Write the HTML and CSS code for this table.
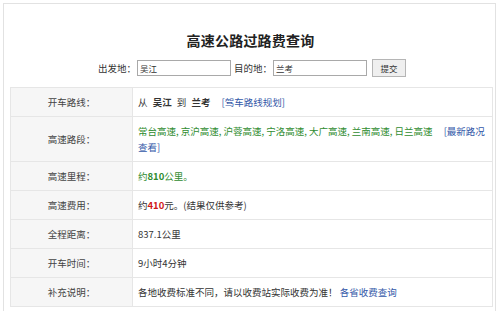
FILE: index.html
```html
<!DOCTYPE html>
<html lang="zh-CN">
<head>
<meta charset="utf-8">
<title>高速公路过路费查询</title>
<link rel="stylesheet" href="styles.css">
</head>
<body>
<div class="frame">
  <h1 class="title">高速公路过路费查询</h1>
  <form class="search">
    <label class="field">出发地：<input class="box" type="text" value="吴江"></label>
    <label class="field">目的地：<input class="box" type="text" value="兰考"></label>
    <button class="submit" type="button">提交</button>
  </form>
  <table class="result">
    <tr class="row">
      <th class="key">开车路线：</th>
      <td class="val"><span class="route">从 <b class="place">吴江</b> 到 <b class="place">兰考</b></span><span class="gap"></span><a class="link" href="#">[驾车路线规划]</a></td>
    </tr>
    <tr class="row">
      <th class="key">高速路段：</th>
      <td class="val"><span class="green">常台高速, 京沪高速, 沪蓉高速, 宁洛高速, 大广高速, 兰南高速, 日兰高速</span><span class="gap"></span><a class="link" href="#">[最新路况查看]</a></td>
    </tr>
    <tr class="row">
      <th class="key">高速里程：</th>
      <td class="val"><span class="green">约<b>810</b>公里。</span></td>
    </tr>
    <tr class="row">
      <th class="key">高速费用：</th>
      <td class="val">约<b class="red">410</b>元。(结果仅供参考)</td>
    </tr>
    <tr class="row">
      <th class="key">全程距离：</th>
      <td class="val">837.1公里</td>
    </tr>
    <tr class="row">
      <th class="key">开车时间：</th>
      <td class="val">9小时4分钟</td>
    </tr>
    <tr class="row">
      <th class="key">补充说明：</th>
      <td class="val">各地收费标准不同，请以收费站实际收费为准！ <a class="link" href="#">各省收费查询</a></td>
    </tr>
  </table>
</div>
</body>
</html>
```
FILE: styles.css
```css
html, body {
  margin: 0;
  padding: 0;
  background: #ffffff;
}
body {
  font-family: "Noto Sans CJK SC", "Liberation Sans", sans-serif;
  font-size: 9.5px;
  color: #333333;
}
.frame {
  margin: 3px 0 0 3px;
  width: 493px;
  height: 320px;
  box-sizing: border-box;
  border: 1px solid #e2e2e2;
  border-bottom: none;
  display: flex;
  flex-direction: column;
  align-items: flex-start;
}
.title {
  align-self: stretch;
  margin: 26px 0 0 0;
  text-align: center;
  font-size: 14px;
  line-height: 20px;
  font-weight: 700;
  color: #222222;
  padding-left: 2px;
  letter-spacing: 0.2px;
}
.search {
  align-self: stretch;
  margin: 9px 0 0 0;
  display: flex;
  justify-content: center;
  align-items: center;
  gap: 3px;
  height: 18px;
  padding-left: 5px;
}
.field {
  display: flex;
  align-items: center;
  gap: 1px;
  color: #333333;
}
.box {
  width: 94px;
  height: 16px;
  box-sizing: border-box;
  margin: 0;
  padding: 0 2px;
  border: 1px solid #a9a9a9;
  font-family: inherit;
  font-size: 8.5px;
  color: #333333;
  background: #ffffff;
}
.submit {
  margin-left: 2px;
  width: 34px;
  height: 18px;
  box-sizing: border-box;
  padding: 0;
  border: 1px solid #b5b5b5;
  background: #efefef;
  font-family: inherit;
  font-size: 8.5px;
  color: #333333;
}
.result {
  margin: 10px 0 0 6px;
  width: 483px;
  border-collapse: collapse;
  table-layout: fixed;
}
.row {
  border: 1px solid #e6e6e6;
}
.key {
  width: 121px;
  background: #f6f6f6;
  border: 1px solid #e6e6e6;
  font-weight: 400;
  text-align: center;
  color: #444444;
  padding: 6px 0;
  line-height: 16px;
}
.val {
  border: 1px solid #e6e6e6;
  padding: 6px 4px 6px 5px;
  line-height: 16px;
  text-align: left;
}
.route {
  word-spacing: 3px;
}
.place {
  font-weight: 700;
}
.gap {
  display: inline-block;
  width: 11px;
}
.link {
  color: #3358a8;
  text-decoration: none;
}
.green {
  color: #2f8c2f;
}
.red {
  color: #d01818;
}
```
